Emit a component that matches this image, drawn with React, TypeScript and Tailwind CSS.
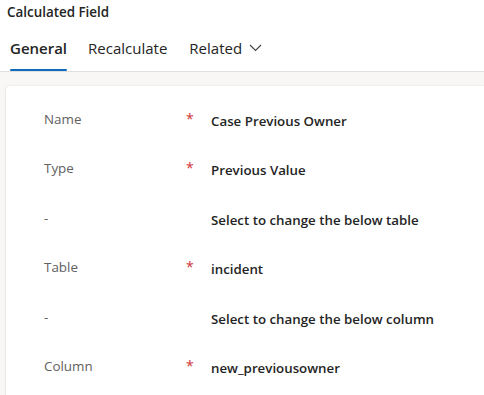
import React from "react";

const rows: { label: string; req: boolean; value: string }[] = [
  { label: "Name", req: true, value: "Case Previous Owner" },
  { label: "Type", req: true, value: "Previous Value" },
  { label: "-", req: false, value: "Select to change the below table" },
  { label: "Table", req: true, value: "incident" },
  { label: "-", req: false, value: "Select to change the below column" },
  { label: "Column", req: true, value: "new_previousowner" },
];

export default function App() {
  return (
    <div
      className="w-[484px] h-[395px] overflow-hidden bg-white flex flex-col"
      style={{ fontFamily: '"Segoe UI", "Open Sans", "Noto Sans", sans-serif' }}
    >
      <div className="bg-white border-b border-[#e1dfdd]">
        <div className="pl-[7px] pt-[2px] h-[22px] text-[13.4px] font-semibold text-[#242424] leading-[20px]">
          Calculated Field
        </div>
        <div className="flex items-end h-[49px] pl-[10px]">
          <div className="flex flex-col items-stretch mr-[21px]">
            <span className="text-[15px] font-semibold text-[#242424] leading-[22px] pb-[10px]">General</span>
            <div className="h-[2px] bg-[#0f6cbd] rounded-sm" />
          </div>
          <div className="flex flex-col mr-[22px]">
            <span className="text-[15px] text-[#242424] leading-[22px] pb-[12px]">Recalculate</span>
          </div>
          <div className="flex items-center pb-[12px] gap-[7px]">
            <span className="text-[15px] text-[#242424] leading-[22px]">Related</span>
            <svg width="13" height="8" viewBox="0 0 13 8" fill="none">
              <path d="M1 1 L6.5 6.5 L12 1" stroke="#424242" strokeWidth="1.1" />
            </svg>
          </div>
        </div>
      </div>
      <div className="flex-1 bg-[#f8f7f6] pl-[6px] pt-[14px]">
        <div className="bg-white h-full rounded-l-[4px] shadow-[0_0_2px_rgba(0,0,0,0.12),0_1px_2px_rgba(0,0,0,0.1)] pt-[23px]">
          {rows.map((r, i) => (
            <div key={i} className="flex items-start h-[49.4px]">
              <div className="w-[182px] pl-[38px] text-[13.4px] text-[#616161] leading-[20px]">{r.label}</div>
              <div className="w-[23px] text-[14px] text-[#d13438] leading-[20px] -ml-[2px] mr-[2px]">{r.req ? "*" : ""}</div>
              <div className="text-[13.3px] font-semibold text-[#242424] leading-[20px] pt-[2px]">{r.value}</div>
            </div>
          ))}
        </div>
      </div>
    </div>
  );
}
